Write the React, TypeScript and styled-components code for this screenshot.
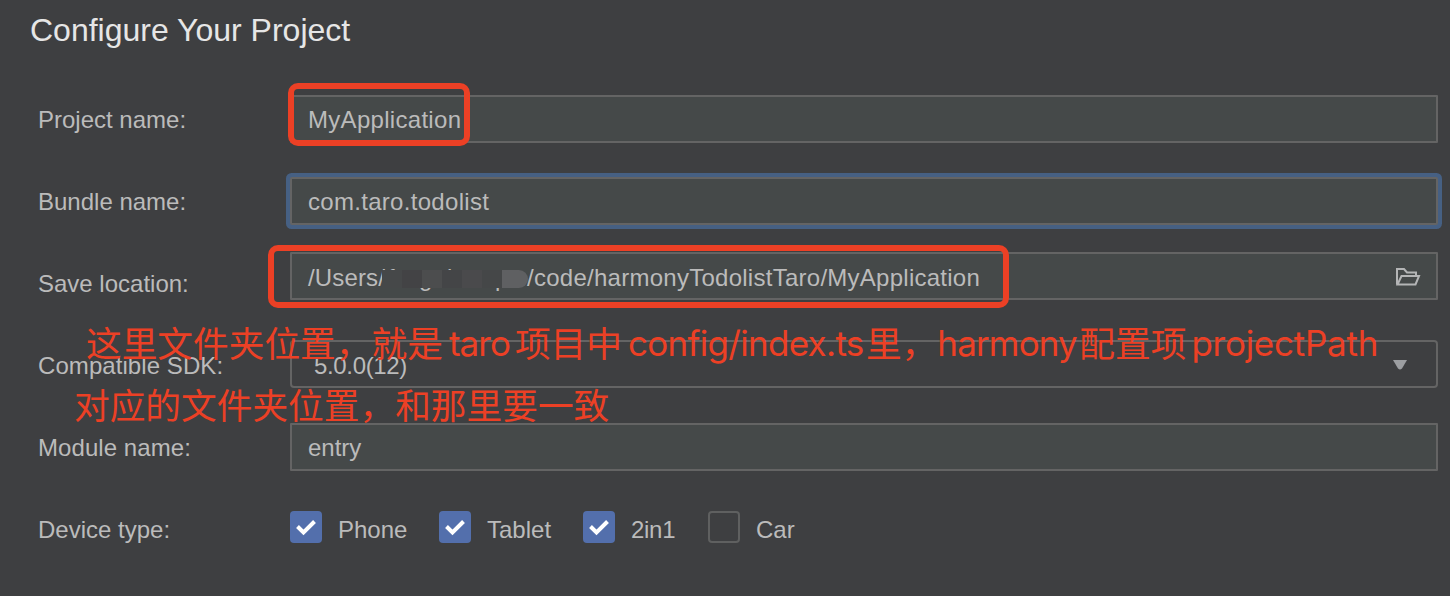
import React from "react";
import styled, { createGlobalStyle } from "styled-components";

const GlobalStyle = createGlobalStyle`
  body { margin: 0; background: #3e3f41; }
  * { box-sizing: border-box; }
`;

const Panel = styled.main`
  position: relative;
  width: 1450px;
  height: 596px;
  padding: 10px 12px 0 38px;
  overflow: hidden;
  background: #3e3f41;
  color: #bbbbbb;
  font: 24px/30px "Liberation Sans", Arial, sans-serif;
  white-space: nowrap;
`;

const Title = styled.h1`
  margin: 0 0 28px -8px;
  height: 40px;
  color: #e6e6e6;
  font-size: 32px;
  font-weight: 400;
  line-height: 41px;
`;

const Row = styled.div`
  display: grid;
  grid-template-columns: 252px 1fr;
  height: 82px;
  align-items: center;
`;

const Text = styled.span<{ $spacing?: number }>`
  letter-spacing: ${(p) => p.$spacing ?? 0}px;
`;

const Label = styled(Text)`
  padding-top: 2px;
`;

const Field = styled.div<{ $kind?: "focused" | "select"; $shift?: number; $drop?: number }>`
  display: flex;
  align-items: center;
  height: 48px;
  margin-top: ${(p) => (p.$shift ?? 0) * 2}px;
  padding: ${(p) => p.$drop ?? 2}px 16px 0 ${(p) => (p.$kind === "select" ? 22 : 16)}px;
  border: 2px solid #646464;
  border-radius: ${(p) => (p.$kind === "select" ? 4 : 1)}px;
  background: ${(p) => (p.$kind === "select" ? "#3e3f41" : "#454949")};
  box-shadow: ${(p) => (p.$kind === "focused" ? "0 0 0 4px #466083" : "none")};
  ${(p) => p.$kind === "focused" && "border-radius: 2px;"}
`;

const Trailing = styled.svg`
  display: block;
  margin: 0 -1px 2px auto;
  flex: none;
`;

const Masked = styled.span`
  position: relative;
  display: grid;
  grid-template-columns: 31px 28px 48px 32px;
  width: 142px;
  height: 30px;
  padding-left: 3px;
`;

const Mask = styled.span`
  position: absolute;
  top: 7px;
  left: -3px;
  display: flex;
  width: 146px;
  height: 18px;
  border-radius: 0 9px 9px 0;
  overflow: hidden;
`;

const Tile = styled.i<{ $tone: string }>`
  flex: 0 0 20px;
  background: ${(p) => p.$tone};
  &:last-child { flex: 1; }
`;

const Options = styled.div`
  display: flex;
  align-items: center;
  margin-top: -4px;
`;

const Option = styled.div<{ $width: number }>`
  display: flex;
  align-items: center;
  gap: 16px;
  width: ${(p) => p.$width}px;
`;

const OptionText = styled(Text)`
  padding-top: 5px;
`;

const Box = styled.span<{ $checked: boolean }>`
  display: grid;
  place-items: center;
  flex: none;
  width: 32px;
  height: 32px;
  border: ${(p) => (p.$checked ? "none" : "2px solid #5f6060")};
  border-radius: 4px;
  background: ${(p) => (p.$checked ? "#536fac" : "transparent")};
`;

const Highlight = styled.div<{ $x: number; $y: number; $w: number; $h: number }>`
  position: absolute;
  left: ${(p) => p.$x}px;
  top: ${(p) => p.$y}px;
  width: ${(p) => p.$w}px;
  height: ${(p) => p.$h}px;
  border: 6px solid #ec4025;
  border-radius: 10px;
`;

const Note = styled.div`
  position: absolute;
  left: 74px;
  top: 311px;
  color: #ec4025;
  font: 400 35.7px/62px "Noto Sans CJK SC", sans-serif;
`;

const NoteLine = styled.div<{ $indent?: number }>`
  display: flex;
  height: 62px;
  padding-left: ${(p) => p.$indent ?? 0}px;
`;

const Latin = styled.span<{ $width: number; $inset?: number; $spacing?: number }>`
  width: ${(p) => p.$width}px;
  padding: 1px 0 0 ${(p) => p.$inset ?? 6}px;
  font-family: Inter, sans-serif;
  font-size: 35px;
  font-weight: 400;
  letter-spacing: ${(p) => p.$spacing ?? 0}px;
`;

const tiles = ["#464849", "#434345", "#4c4d4e", "#444547", "#4a4a4c", "#454748", "#5f6062"];

const devices = [
  { name: "Phone", checked: true, width: 149, spacing: 0 },
  { name: "Tablet", checked: true, width: 144, spacing: 0 },
  { name: "2in1", checked: true, width: 125, spacing: -0.3 },
  { name: "Car", checked: false, width: 100, spacing: 0 },
];

export default function App() {
  return (
    <>
      <GlobalStyle />
      <Panel>
        <Title>Configure Your Project</Title>
        <Row>
          <Label>Project name:</Label>
          <Field><Text $spacing={0.3}>MyApplication</Text></Field>
        </Row>
        <Row>
          <Label>Bundle name:</Label>
          <Field $kind="focused"><Text $spacing={0.3}>com.taro.todolist</Text></Field>
        </Row>
        <Row>
          <Label>Save location:</Label>
          <Field $shift={-7} $drop={4}>
            <Text $spacing={0.15}>/Users/</Text>
            <Masked>
              <span>f</span><span>g</span><span>l</span><span>p</span>
              <Mask>{tiles.map((tone, i) => <Tile key={i} $tone={tone} />)}</Mask>
            </Masked>
            <Text $spacing={0.26}>/code/harmonyTodolistTaro/MyApplication</Text>
            <Trailing width="26" height="20" viewBox="0 0 26 20" fill="none" stroke="#b4b5b6" strokeWidth="2">
              <path d="M2 17.5V2h7l3 3.500h9V9M2.500 17.500 6.500 9H24l-3.500 8.500Z" />
            </Trailing>
          </Field>
        </Row>
        <Row>
          <Label $spacing={0.07}>Compatible SDK:</Label>
          <Field $kind="select" $shift={-1} $drop={4}>
            <Text $spacing={-0.35}>5.0.0(12)</Text>
            <Trailing width="34" height="10" viewBox="0 0 34 10">
              <path d="M6 0h14l-5 8.500q-2 2-4 0Z" fill="#9c9ea1" />
            </Trailing>
          </Field>
        </Row>
        <Row>
          <Label $spacing={0.07}>Module name:</Label>
          <Field><Text>entry</Text></Field>
        </Row>
        <Row>
          <Label>Device type:</Label>
          <Options>
            {devices.map((d) => (
              <Option key={d.name} $width={d.width}>
                <Box $checked={d.checked}>
                  {d.checked && (
                    <svg width="32" height="32" viewBox="0 0 32 32" fill="none" stroke="#fff" strokeWidth="4">
                      <path d="m7.500 15.500 6 6L24.500 10.500" />
                    </svg>
                  )}
                </Box>
                <OptionText $spacing={d.spacing}>{d.name}</OptionText>
              </Option>
            ))}
          </Options>
        </Row>
        <Highlight $x={288} $y={83} $w={182} $h={63} />
        <Highlight $x={268} $y={245} $w={741} $h={63} />
        <Note>
          <NoteLine $indent={12}>
            <span>这里文件夹位置，就是</span>
            <Latin $width={72} $spacing={-0.9}>taro</Latin>
            <span>项目中</span>
            <Latin $width={244} $spacing={-0.7}>config/index.ts</Latin>
            <span>里，</span>
            <Latin $width={142} $inset={0} $spacing={-0.85}>harmony</Latin>
            <span>配置项</span>
            <Latin $width={194} $inset={5} $spacing={-0.25}>projectPath</Latin>
          </NoteLine>
          <NoteLine><span>对应的文件夹位置，和那里要一致</span></NoteLine>
        </Note>
      </Panel>
    </>
  );
}
